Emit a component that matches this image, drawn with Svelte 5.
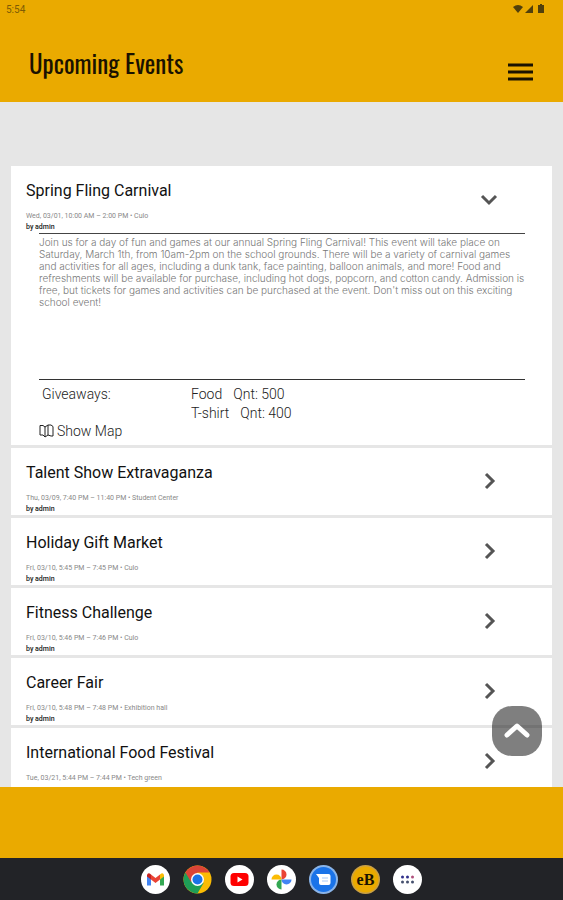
<script lang="ts">
    type Giveaway = { name: string; quantity: number };
    type CampusEvent = {
        title: string;
        meta: string;
        author?: string;
        description?: string;
        giveaways?: Giveaway[];
    };

    const events: CampusEvent[] = [
        {
            title: "Spring Fling Carnival",
            meta: "Wed, 03/01, 10:00 AM – 2:00 PM • Culo",
            author: "admin",
            description:
                "Join us for a day of fun and games at our annual Spring Fling Carnival! This event will take place on Saturday, March 1th, from 10am-2pm on the school grounds. There will be a variety of carnival games and activities for all ages, including a dunk tank, face painting, balloon animals, and more! Food and refreshments will be available for purchase, including hot dogs, popcorn, and cotton candy. Admission is free, but tickets for games and activities can be purchased at the event. Don't miss out on this exciting school event!",
            giveaways: [
                { name: "Food", quantity: 500 },
                { name: "T-shirt", quantity: 400 },
            ],
        },
        { title: "Talent Show Extravaganza", meta: "Thu, 03/09, 7:40 PM – 11:40 PM • Student Center", author: "admin" },
        { title: "Holiday Gift Market", meta: "Fri, 03/10, 5:45 PM – 7:45 PM • Culo", author: "admin" },
        { title: "Fitness Challenge", meta: "Fri, 03/10, 5:46 PM – 7:46 PM • Culo", author: "admin" },
        { title: "Career Fair", meta: "Fri, 03/10, 5:48 PM – 7:48 PM • Exhibition hall", author: "admin" },
        { title: "International Food Festival", meta: "Tue, 03/21, 5:44 PM – 7:44 PM • Tech green" },
    ];

    const apps = ["Gmail", "Chrome", "YouTube", "Photos", "Messages", "eB", "All apps"];

    let open = $state(0);
    let list: HTMLElement;

    function toggle(i: number) {
        open = open === i ? -1 : i;
    }
</script>

<div class="screen">
    <div class="status">
        <span>5:54</span>
        <svg width="32" height="10" viewBox="0 0 32 10" aria-hidden="true">
            <path d="M0 3Q5 -1 10 3L5 9z" />
            <path d="M20 1v8h-8z" />
            <path d="M25 1h2V0h2v1h2v8h-6z" />
        </svg>
    </div>

    <header>
        <h1>Upcoming Events</h1>
        <button class="menu" aria-label="Menu">
            <svg width="25" height="18" viewBox="0 0 25 18">
                <path d="M0 2h25M0 9h25M0 16h25" stroke="#1a1200" stroke-width="3" />
            </svg>
        </button>
    </header>

    <main>
        <div class="list" bind:this={list}>
            {#each events as event, i}
                <article>
                    <button class="summary" aria-expanded={open === i} onclick={() => toggle(i)}>
                        <span class="info">
                            <span class="title">{event.title}</span>
                            <span class="meta">{event.meta}</span>
                            {#if event.author}
                                <span class="author">by {event.author}</span>
                            {/if}
                        </span>
                        <svg class="chevron" class:down={open === i} width="18" height="18" viewBox="0 0 18 18">
                            <path d="M6 2l7 7l-7 7" />
                        </svg>
                    </button>
                    {#if open === i && event.description}
                        <div class="details">
                            <p>{event.description}</p>
                            <div class="giveaways">
                                <span>Giveaways:</span>
                                <ul>
                                    {#each event.giveaways ?? [] as item}
                                        <li><span>{item.name}</span><span>Qnt: {item.quantity}</span></li>
                                    {/each}
                                </ul>
                            </div>
                            <button class="map">
                                <svg width="15" height="14" viewBox="0 0 15 14">
                                    <path d="M1 1.500v9.500h3l2 2V3L4 1.500zM6 3l3-2v10l-3 2M9 1h3l2 1.500V12h-2l-3-1" />
                                </svg>
                                Show Map
                            </button>
                        </div>
                    {/if}
                </article>
            {/each}
        </div>
        <button class="to-top" aria-label="Back to top" onclick={() => list.scrollTo({ top: 0, behavior: "smooth" })}>
            <svg width="26" height="16" viewBox="0 0 26 16">
                <path d="M3 12L13 3l10 9" />
            </svg>
        </button>
    </main>

    <footer></footer>

    <nav>
        {#each apps as app}
            <button aria-label={app}>
                <svg width="29" height="29" viewBox="0 0 29 29">
                    {#if app === "Gmail"}
                        <circle cx="14.5" cy="14.5" r="14.5" fill="#fff" />
                        <path d="M6 10v10.500h4V13z" fill="#4285f4" />
                        <path d="M19 13v7.500h4V10z" fill="#34a853" />
                        <path d="M19 9.500v5l4-3v-1.500q-1-3-4-.5z" fill="#fbbc04" />
                        <path d="M6 10v1.500l4 3v-5q-3-2.500-4 .5z" fill="#c5221f" />
                        <path d="M10 9.500l4.500 3.500L19 9.500v5L14.500 18L10 14.500z" fill="#ea4335" />
                    {:else if app === "Chrome"}
                        <circle cx="14.5" cy="14.5" r="14" fill="#fbbc04" />
                        <path d="M2.400 7.500A14 14 0 0 0 14.500 28.500L20.600 18L14.500 14.500z" fill="#1e9e57" />
                        <path d="M2.400 7.500A14 14 0 0 1 26.600 7.500H14.500L8 17z" fill="#db4437" />
                        <circle cx="14.5" cy="14.5" r="6.500" fill="#fff" />
                        <circle cx="14.5" cy="14.5" r="5" fill="#1a73e8" />
                    {:else if app === "YouTube"}
                        <circle cx="14.5" cy="14.5" r="14.5" fill="#fff" />
                        <rect x="5.500" y="8" width="18" height="13" rx="3.500" fill="#f00" />
                        <path d="M12.500 11.500v6l5-3z" fill="#fff" />
                    {:else if app === "Photos"}
                        <circle cx="14.5" cy="14.5" r="14.5" fill="#fff" />
                        <path d="M14.500 14.500V4.500a5 5 0 0 1 0 10z" fill="#ea4335" />
                        <path d="M14.500 14.500h10a5 5 0 0 1-10 0z" fill="#4285f4" />
                        <path d="M14.500 14.500v10a5 5 0 0 1 0-10z" fill="#34a853" />
                        <path d="M14.500 14.500h-10a5 5 0 0 1 10 0z" fill="#fbbc04" />
                    {:else if app === "Messages"}
                        <circle cx="14.5" cy="14.5" r="14.5" fill="#8ab4e8" />
                        <circle cx="14.5" cy="14.5" r="12.500" fill="#1a73e8" />
                        <path d="M7 9h12.500q2 0 2 2v7q0 2-2 2H12q-2 0-2-2v-5z" fill="#fff" />
                        <path d="M13 13h6M13 16h6" stroke="#a9c9f7" />
                    {:else if app === "eB"}
                        <circle cx="14.5" cy="14.5" r="14.5" fill="#c9a046" />
                        <circle cx="14.5" cy="14.5" r="13" fill="#eaaa00" />
                        <text x="14.5" y="20" text-anchor="middle">eB</text>
                    {:else}
                        <circle cx="14.5" cy="14.5" r="14.5" fill="#fff" />
                        {#each [9.5, 14.5, 19.5] as x}
                            <circle cx={x} cy="12" r="1.500" fill={x === 19.5 ? "#b0507c" : "#31308c"} />
                            <circle cx={x} cy="17" r="1.500" fill="#45506e" />
                        {/each}
                    {/if}
                </svg>
            </button>
        {/each}
    </nav>
</div>

<style>
    :global(body) {
        margin: 0;
    }
    .screen {
        display: flex;
        flex-direction: column;
        height: 100vh;
        background: #e6e6e6;
        color: #222;
        font-family: Roboto, sans-serif;
    }
    button {
        padding: 0;
        border: 0;
        background: none;
        color: inherit;
        font: inherit;
        text-align: left;
        cursor: pointer;
    }
    svg {
        display: block;
    }

    .status {
        display: flex;
        justify-content: space-between;
        align-items: center;
        height: 18px;
        padding: 0 18px 0 6px;
        background: #eaaa00;
        color: #7d5c05;
        font-size: 10px;
    }
    .status svg {
        fill: #51400c;
    }
    header {
        display: flex;
        justify-content: space-between;
        height: 84px;
        padding: 0 30px 0 29px;
        background: #eaaa00;
    }
    h1 {
        margin: 29px 0 0;
        color: #1a1200;
        font-family: Oswald, "Roboto Condensed", "Liberation Sans Narrow", sans-serif;
        font-size: 25px;
        font-weight: 400;
        line-height: 32px;
    }
    .menu {
        align-self: flex-start;
        margin-top: 45px;
    }

    main {
        position: relative;
        flex: 1;
        min-height: 0;
    }
    .list {
        display: flex;
        flex-direction: column;
        gap: 3px;
        box-sizing: border-box;
        height: 100%;
        padding: 64px 11px 0;
        overflow-y: auto;
        scrollbar-width: none;
    }
    article {
        flex: none;
        min-height: 67px;
        background: #fff;
    }
    .summary {
        display: flex;
        justify-content: space-between;
        align-items: flex-start;
        width: 100%;
        padding: 15px 54px 2px 15px;
    }
    .info {
        display: flex;
        flex-direction: column;
    }
    .title {
        margin-bottom: 11px;
        color: #111;
        font-size: 16px;
        line-height: 20px;
    }
    .meta,
    .author {
        font-size: 7px;
        line-height: 8px;
    }
    .meta {
        margin-bottom: 3px;
        color: #888;
    }
    .author {
        color: #222;
        font-weight: 500;
    }
    .chevron {
        margin-top: 9px;
        fill: none;
        stroke: #555;
        stroke-width: 3;
    }
    .chevron.down {
        transform: rotate(90deg);
    }

    .details {
        padding: 0 27px 6px 28px;
    }
    p {
        box-sizing: border-box;
        min-height: 147px;
        margin: 0;
        padding-top: 2px;
        border-top: 1px solid #444;
        border-bottom: 1px solid #333;
        color: #777;
        font-family: Inter, sans-serif;
        font-size: 10px;
        font-weight: 300;
        line-height: 12px;
    }
    .giveaways {
        display: grid;
        grid-template-columns: 149px 1fr;
        padding: 5px 3px 0;
        font-size: 14px;
        font-weight: 300;
        line-height: 19px;
    }
    ul {
        margin: 0;
        padding: 0;
        list-style: none;
    }
    li {
        display: flex;
        gap: 11px;
    }
    .map {
        display: flex;
        align-items: center;
        gap: 3px;
        font-size: 14px;
        font-weight: 300;
        line-height: 16px;
    }
    .map svg {
        fill: none;
        stroke: #222;
    }

    .to-top {
        position: absolute;
        right: 21px;
        bottom: 31px;
        display: grid;
        place-items: center;
        width: 50px;
        height: 50px;
        border-radius: 20px;
        background: rgba(0, 0, 0, 0.5);
    }
    .to-top path {
        fill: none;
        stroke: #fff;
        stroke-width: 5;
        stroke-linecap: round;
        stroke-linejoin: round;
    }

    footer {
        height: 71px;
        background: #eaaa00;
    }
    nav {
        display: flex;
        justify-content: center;
        align-items: center;
        gap: 13px;
        height: 42px;
        background: #222327;
    }
    nav text {
        fill: #1a1200;
        font-family: "Liberation Serif", serif;
        font-size: 16px;
        font-weight: 700;
    }
</style>
